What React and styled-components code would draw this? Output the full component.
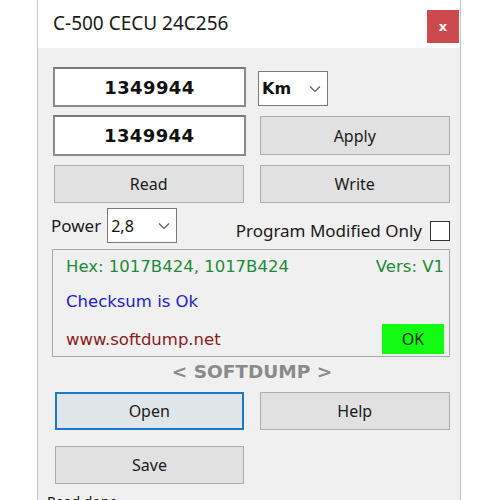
import React from 'react'
import styled, { createGlobalStyle } from 'styled-components'

const Global = createGlobalStyle`
  html, body {
    margin: 0;
    padding: 0;
    background: #ffffff;
    width: 500px;
    height: 500px;
    overflow: hidden;
  }
  body {
    font-family: "Open Sans", "Noto Sans", sans-serif;
  }
`

const Page = styled.div`
  padding-left: 37px;
`

const Window = styled.div`
  width: 422px;
  height: 520px;
  border-left: 1px solid #c4c4c4;
  border-right: 1px solid #c4c4c4;
  background: #f0f0f0;
  display: flex;
  flex-direction: column;
`

const TitleBar = styled.div`
  height: 48px;
  background: #ffffff;
  display: flex;
  align-items: center;
  justify-content: space-between;
  padding: 0 1px 0 15px;
`

const Title = styled.div`
  font-family: "Noto Sans", sans-serif;
  font-size: 19px;
  color: #1a1a1a;
  margin-top: -3px;
`

const CloseBtn = styled.div`
  width: 32px;
  height: 33px;
  margin-top: 5px;
  background: #cc4a4d;
  color: #ffffff;
  font-family: "DejaVu Sans", sans-serif;
  font-weight: bold;
  font-size: 13px;
  display: flex;
  align-items: center;
  justify-content: center;
`

const Body = styled.div`
  padding: 19px 10px 0 15px;
  display: flex;
  flex-direction: column;
`

const Row = styled.div`
  display: flex;
  align-items: ${(p) => p.$align || 'center'};
  gap: ${(p) => p.$gap || 16}px;
  margin-top: ${(p) => p.$mt || 0}px;
`

const NumBox = styled.div`
  width: 193px;
  height: ${(p) => p.$h}px;
  box-sizing: border-box;
  background: #ffffff;
  border: 2px solid #8a8a8a;
  border-top-color: #7a7a7a;
  display: flex;
  align-items: center;
  justify-content: center;
  font-family: "DejaVu Sans", sans-serif;
  font-weight: bold;
  font-size: 18px;
  color: #111;
  letter-spacing: 0.4px;
`

const Select = styled.div`
  width: ${(p) => p.$w}px;
  height: 35px;
  box-sizing: border-box;
  background: #ffffff;
  border: 1px solid #7a7a7a;
  display: flex;
  align-items: center;
  justify-content: space-between;
  padding: 0 6px 0 3px;
  font-family: ${(p) => (p.$bold ? '"DejaVu Sans", sans-serif' : '"Noto Sans", sans-serif')};
  font-weight: ${(p) => (p.$bold ? 'bold' : 'normal')};
  font-size: 16px;
  color: #111;
  margin-top: ${(p) => p.$mt || 0}px;
`

const Chevron = () => (
  <svg width="12" height="8" viewBox="0 0 12 8">
    <path d="M1 1.5 L6 6.5 L11 1.5" fill="none" stroke="#555" strokeWidth="1.1" />
  </svg>
)

const Button = styled.div`
  width: ${(p) => p.$w || 191}px;
  height: ${(p) => p.$h || 38}px;
  box-sizing: border-box;
  background: ${(p) => (p.$focus ? '#e1e6ea' : '#e1e1e1')};
  border: ${(p) => (p.$focus ? '2px solid #1a78cf' : '1px solid #adadad')};
  display: flex;
  align-items: center;
  justify-content: center;
  font-family: "Noto Sans", sans-serif;
  font-size: 16px;
  color: #1a1a1a;
  margin-left: ${(p) => p.$ml || 0}px;
`

const Label = styled.span`
  font-family: "Noto Sans", sans-serif;
  font-size: ${(p) => p.$size || 16}px;
  color: #1a1a1a;
`

const PowerLabel = styled(Label)`
  margin-top: 6px;
  margin-left: -2px;
`

const CheckWrap = styled.div`
  margin-left: auto;
  display: flex;
  align-items: center;
  gap: 8px;
  margin-top: 11px;
`

const CheckBox = styled.div`
  width: 20px;
  height: 20px;
  box-sizing: border-box;
  background: #ffffff;
  border: 1px solid #333;
`

const Group = styled.div`
  width: 398px;
  height: 108px;
  box-sizing: border-box;
  border: 1px solid #a8a8a8;
  margin-top: 6px;
  margin-left: -1px;
  padding: 3px 5px 0 13px;
  display: flex;
  flex-direction: column;
`

const InfoLine = styled.div`
  display: flex;
  justify-content: space-between;
  align-items: center;
  font-family: "DejaVu Sans", sans-serif;
  font-size: 16.5px;
  color: ${(p) => p.$color};
  height: ${(p) => p.$h}px;
`

const OkBadge = styled.div`
  width: 62px;
  height: 30px;
  background: #12fb12;
  color: #1a2a1a;
  font-family: "Noto Sans", sans-serif;
  font-size: 16px;
  display: flex;
  align-items: center;
  justify-content: center;
`

const Brand = styled.div`
  width: 398px;
  text-align: center;
  font-family: "DejaVu Sans", sans-serif;
  font-weight: bold;
  font-size: 18.5px;
  color: #8a8a8a;
  margin-top: 4px;
`

const Status = styled.div`
  font-family: "Noto Sans", sans-serif;
  font-size: 14px;
  line-height: 18px;
  color: #111;
  margin-top: 9px;
  margin-left: -6px;
`

export default function App() {
  return (
    <>
      <Global />
      <Page>
        <Window>
          <TitleBar>
            <Title>C-500 CECU 24C256</Title>
            <CloseBtn>x</CloseBtn>
          </TitleBar>
          <Body>
            <Row $align="flex-start" $gap={12}>
              <NumBox $h={40}>1349944</NumBox>
              <Select $w={70} $bold $mt={4}>
                <span>Km</span>
                <Chevron />
              </Select>
            </Row>
            <Row $mt={8} $gap={14}>
              <NumBox $h={41}>1349944</NumBox>
              <Button $h={39}>Apply</Button>
            </Row>
            <Row $mt={9} $gap={16}>
              <Button $w={190} $ml={1}>Read</Button>
              <Button>Write</Button>
            </Row>
            <Row $mt={5} $gap={6} $align="flex-start">
              <PowerLabel $size={17}>Power</PowerLabel>
              <Select $w={70}>
                <span>2,8</span>
                <Chevron />
              </Select>
              <CheckWrap>
                <Label $size={17}>Program Modified Only</Label>
                <CheckBox />
              </CheckWrap>
            </Row>
            <Group>
              <InfoLine $color="#1f8a3a" $h={27}>
                <span>Hex: 1017B424, 1017B424</span>
                <span>Vers: V1</span>
              </InfoLine>
              <InfoLine $color="#2020c8" $h={43}>
                <span>Checksum is Ok</span>
              </InfoLine>
              <InfoLine $color="#8a1a1a" $h={32}>
                <span>www.softdump.net</span>
                <OkBadge>OK</OkBadge>
              </InfoLine>
            </Group>
            <Brand>&lt; SOFTDUMP &gt;</Brand>
            <Row $mt={10} $gap={16}>
              <Button $w={189} $ml={2} $focus>Open</Button>
              <Button $h={38}>Help</Button>
            </Row>
            <Row $mt={16}>
              <Button $w={189} $ml={2}>Save</Button>
            </Row>
            <Status>Read done</Status>
          </Body>
        </Window>
      </Page>
    </>
  )
}
